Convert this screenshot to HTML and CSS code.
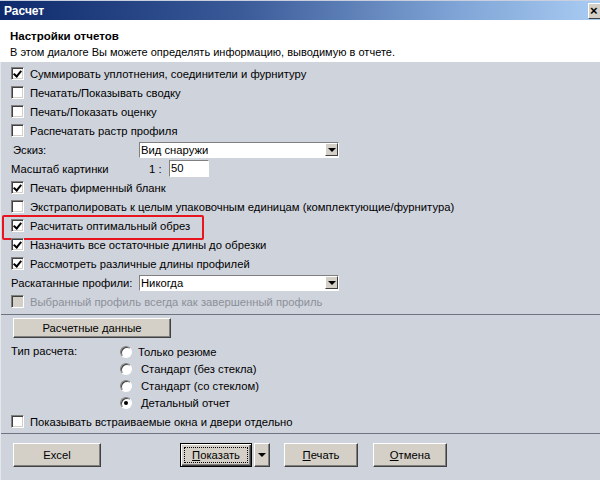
FILE: index.html
```html
<!DOCTYPE html>
<html>
<head>
<meta charset="utf-8">
<link rel="stylesheet" href="styles.css">
</head>
<body>
<div class="window">
  <div class="titlebar">
    <span class="title">Расчет</span>
    <span class="closebtn">×</span>
  </div>
  <div class="header">
    <div class="h-title">Настройки отчетов</div>
    <div class="h-desc">В этом диалоге Вы можете определять информацию, выводимую в отчете.</div>
  </div>
  <div class="main">
    <div class="row"><span class="cb checked"></span><span class="lbl">Суммировать уплотнения, соединители и фурнитуру</span></div>
    <div class="row"><span class="cb"></span><span class="lbl">Печатать/Показывать сводку</span></div>
    <div class="row"><span class="cb"></span><span class="lbl">Печать/Показать оценку</span></div>
    <div class="row"><span class="cb"></span><span class="lbl">Распечатать растр профиля</span></div>
    <div class="row field"><span class="flabel e">Эскиз:</span><span class="select"><span class="sval">Вид снаружи</span><span class="sarrow"></span></span></div>
    <div class="row field"><span class="flabel m">Масштаб картинки</span><span class="ratio">1 :</span><span class="input">50</span></div>
    <div class="row"><span class="cb checked"></span><span class="lbl">Печать фирменный бланк</span></div>
    <div class="row"><span class="cb"></span><span class="lbl">Экстраполировать к целым упаковочным единицам (комплектующие/фурнитура)</span></div>
    <div class="row marked"><span class="cb checked"></span><span class="lbl">Расчитать оптимальный обрез</span><span class="redbox"></span></div>
    <div class="row"><span class="cb checked"></span><span class="lbl">Назначить все остаточные длины до обрезки</span></div>
    <div class="row"><span class="cb checked"></span><span class="lbl">Рассмотреть различные длины профилей</span></div>
    <div class="row field"><span class="flabel m">Раскатанные профили:</span><span class="select"><span class="sval">Никогда</span><span class="sarrow"></span></span></div>
    <div class="row disabled"><span class="cb"></span><span class="lbl">Выбранный профиль всегда как завершенный профиль</span></div>
    <div class="sep"></div>
    <div class="calcrow"><span class="btn calc">Расчетные данные</span></div>
    <div class="radios">
      <span class="rlabel">Тип расчета:</span>
      <div class="rlist">
        <div class="rrow"><span class="rb"></span><span class="rtext first">Только резюме</span></div>
        <div class="rrow"><span class="rb"></span><span class="rtext">Стандарт (без стекла)</span></div>
        <div class="rrow"><span class="rb"></span><span class="rtext">Стандарт (со стеклом)</span></div>
        <div class="rrow"><span class="rb on"></span><span class="rtext">Детальный отчет</span></div>
      </div>
    </div>
    <div class="row last"><span class="cb"></span><span class="lbl">Показывать встраиваемые окна и двери отдельно</span></div>
    <div class="sep bottom"></div>
    <div class="buttons">
      <span class="btn excel">Excel</span>
      <span class="btn show default"><span class="focus"><u>П</u>оказать</span></span>
      <span class="btn drop"><span class="tri"></span></span>
      <span class="btn print"><u>П</u>ечать</span>
      <span class="btn cancel"><u>О</u>тмена</span>
    </div>
  </div>
</div>
</body>
</html>
```
FILE: styles.css
```css
html, body {
  margin: 0;
  padding: 0;
}
body {
  width: 600px;
  height: 480px;
  overflow: hidden;
  font-family: "Liberation Sans", Arial, sans-serif;
  font-size: 11.25px;
  color: #000;
  background: #cfd3dc;
  white-space: nowrap;
}
.window {
  width: 600px;
  height: 480px;
  display: flex;
  flex-direction: column;
}
.titlebar {
  height: 20px;
  box-sizing: border-box;
  border-top: 1px solid #c8d0e0;
  background: linear-gradient(to right, #0e2a6c 0%, #3a5a98 40%, #7ea2d4 75%, #a8ccf2 100%);
  display: flex;
  align-items: center;
  overflow: hidden;
}
.title {
  color: #fff;
  font-weight: bold;
  font-size: 12px;
  padding-left: 4px;
  flex: 1;
}
.closebtn {
  width: 16px;
  height: 14px;
  margin-right: -7px;
  background: #d4d0c8;
  border: 1px solid;
  border-color: #fff #404040 #404040 #fff;
  font-size: 13px;
  font-weight: bold;
  line-height: 13px;
  text-align: left;
  padding-left: 1px;
  box-sizing: content-box;
}
.header {
  height: 42px;
  background: #fff;
  padding-left: 10px;
  box-sizing: border-box;
  padding-top: 8px;
}
.h-title {
  font-weight: bold;
  font-size: 11.5px;
  height: 16px;
  line-height: 16px;
}
.h-desc {
  font-size: 11px;
  height: 17px;
  line-height: 17px;
}
.main {
  flex: 1;
  padding-top: 2px;
  border-left: 1px solid #e4e7ee;
  display: flex;
  flex-direction: column;
}
.row {
  height: 19px;
  display: flex;
  align-items: center;
  padding-left: 10px;
  position: relative;
}
.cb {
  width: 11px;
  height: 11px;
  background: #fff;
  border: 1px solid;
  border-color: #808080 #fff #fff #808080;
  box-shadow: inset 1px 1px 0 #404040, inset -1px -1px 0 #d4d0c8;
  margin-right: 6px;
  flex: none;
  position: relative;
}
.cb.checked::after {
  content: "";
  position: absolute;
  left: 3px;
  top: 1px;
  width: 3px;
  height: 6px;
  border: solid #000;
  border-width: 0 2px 2px 0;
  transform: rotate(40deg);
}
.disabled .cb {
  background: #d4d0c8;
}
.disabled .lbl {
  color: #8c9098;
}
.flabel.e {
  padding-left: 2px;
  width: 126px;
}
.flabel.m {
  width: 128px;
}
.select {
  width: 200px;
  height: 16px;
  box-sizing: border-box;
  background: #fff;
  border: 1px solid;
  border-color: #808080 #fff #fff #808080;
  display: flex;
  align-items: center;
  justify-content: space-between;
}
.sval {
  padding-left: 1px;
  line-height: 14px;
}
.sarrow {
  width: 13px;
  height: 13px;
  box-sizing: border-box;
  background: #d4d0c8;
  border: 1px solid;
  border-color: #fff #404040 #404040 #fff;
  position: relative;
}
.sarrow::after {
  content: "";
  position: absolute;
  left: 2px;
  top: 4px;
  border-left: 4px solid transparent;
  border-right: 4px solid transparent;
  border-top: 4px solid #000;
}
.ratio {
  padding-left: 10px;
  width: 20px;
}
.input {
  width: 40px;
  height: 17px;
  box-sizing: border-box;
  background: #fff;
  border: 1px solid;
  border-color: #808080 #fff #fff #808080;
  line-height: 15px;
  padding-left: 1px;
}
.redbox {
  position: absolute;
  left: 1px;
  top: -1px;
  width: 202px;
  height: 25px;
  box-sizing: border-box;
  border: 2px solid #e8141e;
  border-radius: 2px;
}
.sep {
  height: 1px;
  background: #6e7380;
  margin-top: 3px;
}
.calcrow {
  padding: 3px 0 0 12px;
  height: 20px;
}
.btn {
  display: inline-flex;
  align-items: center;
  justify-content: center;
  box-sizing: border-box;
  background: #d4d0c8;
  border: 1px solid;
  border-color: #fff #404040 #404040 #fff;
  box-shadow: inset -1px -1px 0 #808080;
}
.btn.calc {
  width: 158px;
  height: 20px;
}
.radios {
  display: flex;
  padding-left: 10px;
  margin-top: 5px;
}
.rlabel {
  width: 109px;
  height: 17px;
  line-height: 17px;
}
.rlist {
  display: flex;
  flex-direction: column;
}
.rrow {
  height: 17px;
  display: flex;
  align-items: center;
}
.rb {
  width: 12px;
  height: 12px;
  box-sizing: border-box;
  border-radius: 50%;
  background: #fff;
  border: 1px solid;
  border-color: #808080 #fff #fff #808080;
  box-shadow: inset 1px 1px 0 #404040;
  position: relative;
  flex: none;
}
.rb.on::after {
  content: "";
  position: absolute;
  left: 3px;
  top: 3px;
  width: 4px;
  height: 4px;
  border-radius: 50%;
  background: #000;
}
.rtext {
  padding-left: 9px;
}
.rtext.first {
  padding-left: 6px;
}
.row.last {
  margin-top: 1px;
}
.sep.bottom {
  margin-top: 2px;
}
.buttons {
  display: flex;
  padding: 9px 0 0 12px;
  height: 24px;
}
.buttons .btn {
  height: 24px;
}
.btn.excel {
  width: 88px;
}
.btn.show {
  width: 72px;
  margin-left: 79px;
  border: 1px solid #000;
  box-shadow: inset 1px 1px 0 #fff, inset -1px -1px 0 #404040, inset -2px -2px 0 #808080;
}
.focus {
  width: 64px;
  height: 16px;
  box-sizing: border-box;
  border: 1px dotted #000;
  display: flex;
  align-items: center;
  justify-content: center;
}
.btn.drop {
  width: 16px;
  margin-left: 2px;
}
.tri {
  border-left: 4px solid transparent;
  border-right: 4px solid transparent;
  border-top: 4px solid #000;
}
.btn.print {
  width: 74px;
  margin-left: 14px;
}
.btn.cancel {
  width: 74px;
  margin-left: 15px;
}
u {
  text-decoration: underline;
}
```
